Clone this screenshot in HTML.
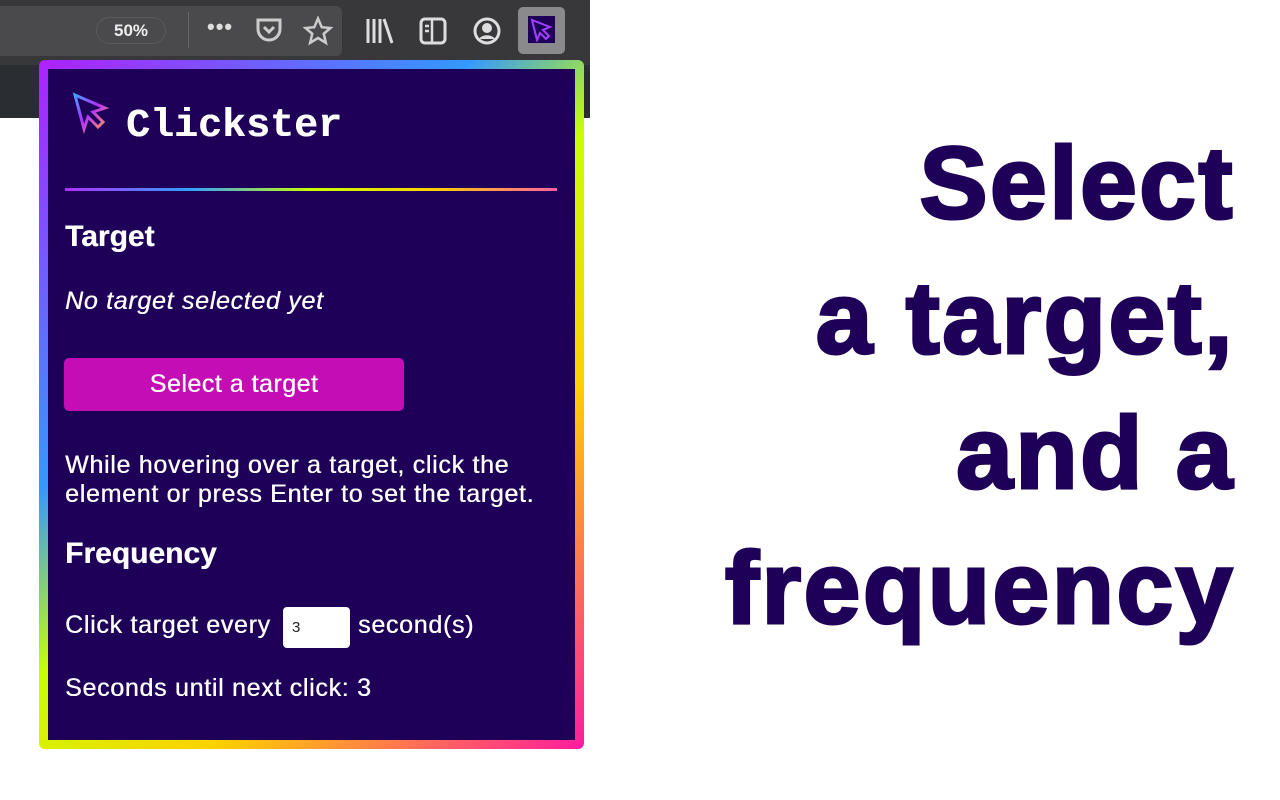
<!DOCTYPE html>
<html><head><style>
*{margin:0;padding:0;box-sizing:border-box}
body{width:1280px;height:800px;background:#fff;position:relative;overflow:hidden;font-family:"Liberation Sans",Arial,sans-serif}
.tb{position:absolute;left:0;top:0;width:590px;height:65px;background:#38383b}
.url{position:absolute;left:-10px;top:6px;width:352px;height:50px;background:#4a4a4d;border-radius:6px}
.strip{position:absolute;left:0;top:65px;width:590px;height:53px;background:#2a2e33}
.pill{position:absolute;left:96px;top:17px;width:70px;height:27px;border-radius:14px;border:1px solid #5a5a5d;color:#eee;font-size:17px;font-weight:bold;text-align:center;line-height:25px}
.ic{position:absolute;color:#ddd}
.panel{position:absolute;left:39px;top:60px;width:545px;height:689px;border-radius:6px;background:linear-gradient(135deg,#b020ff 0%,#3399ff 35%,#c8ff00 50%,#ffd000 70%,#ff1aa0 100%)}
.inner{position:absolute;left:9px;top:9px;right:9px;bottom:9px;background:#1e0058;color:#fff}
.t{position:absolute;left:17px;white-space:nowrap;text-shadow:0.4px 0 0 #fff}
.b{font-size:25px;letter-spacing:0.7px}
h2{font-size:30px;font-weight:bold}
.big{position:absolute;right:45px;top:116px;text-align:right;color:#1e0058;font-weight:bold;font-size:102px;line-height:135px;letter-spacing:2.5px;-webkit-text-stroke:3px #1e0058}
</style></head><body>
<div class="tb"><div class="url"></div>
<div class="pill">50%</div>
<div style="position:absolute;left:188px;top:12px;width:1px;height:36px;background:#666"></div>
<div class="ic" style="left:207px;top:14px;font-size:22px;font-weight:bold;letter-spacing:1px">•••</div>
<svg class="ic" style="left:255px;top:17px" width="28" height="26" viewBox="0 0 28 26"><path d="M3 3h22v9a11 11 0 0 1-22 0z" fill="none" stroke="#ccc" stroke-width="3"/><path d="M9 10l5 5 5-5" fill="none" stroke="#ccc" stroke-width="3"/></svg>
<svg style="position:absolute;left:303px;top:16px" width="30" height="30" viewBox="0 0 24 24"><path d="M12 2l3 7 7 .6-5.4 4.6 1.7 7.3L12 17.6 5.7 21.5l1.7-7.3L2 9.6 9 9z" fill="none" stroke="#ccc" stroke-width="2"/></svg>
<svg style="position:absolute;left:365px;top:17px" width="30" height="28" viewBox="0 0 30 28"><path d="M3 2v24M9 2v24M15 2v24M19 2l8 24" stroke="#ddd" stroke-width="3"/></svg>
<svg style="position:absolute;left:419px;top:17px" width="28" height="28" viewBox="0 0 28 28"><rect x="2" y="2" width="24" height="24" rx="4" fill="none" stroke="#ddd" stroke-width="3"/><path d="M13 2v24M6 9h4M6 14h4" stroke="#ddd" stroke-width="2.5"/></svg>
<svg style="position:absolute;left:473px;top:17px" width="28" height="28" viewBox="0 0 28 28"><circle cx="14" cy="14" r="12" fill="none" stroke="#ddd" stroke-width="3"/><circle cx="14" cy="11" r="5" fill="#ddd"/><path d="M6 22a9 7 0 0 1 16 0" fill="#ddd"/></svg>
<div style="position:absolute;left:518px;top:7px;width:47px;height:47px;background:#8a8a8c;border-radius:5px"></div>
<div style="position:absolute;left:528px;top:16px;width:27px;height:27px;background:#1e0058"></div>
<svg style="position:absolute;left:530px;top:18px" width="24" height="24" viewBox="0 0 24 24"><path d="M2 2l18 7-7 3 6 6-3 3-6-6-3 7z" fill="none" stroke="#a040ff" stroke-width="2"/></svg>
</div>
<div class="strip"></div>
<div class="panel"><div class="inner">
<svg style="position:absolute;left:24px;top:23px" width="38" height="42" viewBox="0 0 38 42"><defs><linearGradient id="g" x1="0" y1="0" x2="1" y2="1"><stop offset="0" stop-color="#40a0ff"/><stop offset=".5" stop-color="#b030ff"/><stop offset="1" stop-color="#ff9060"/></linearGradient></defs><path d="M3 3l30 13-12 4 10 10-5 5-10-10-4 12z" fill="none" stroke="url(#g)" stroke-width="3"/></svg>
<div class="t" style="left:78px;top:35px;font-family:'Liberation Mono',monospace;font-weight:bold;font-size:40px">Clickster</div>
<div style="position:absolute;left:17px;top:119px;width:492px;height:3px;background:linear-gradient(90deg,#b030ff,#30a0ff,#c8ff00,#ffd000,#ff60a0)"></div>
<h2 class="t" style="top:151px">Target</h2>
<div class="t b" style="top:218px;font-style:italic">No target selected yet</div>
<div style="position:absolute;left:16px;top:289px;width:340px;height:53px;background:#c40db5;border-radius:5px;text-align:center;line-height:53px;font-size:25px;letter-spacing:0.5px;text-shadow:0.4px 0 0 #fff">Select a target</div>
<div class="t b" style="top:382px;line-height:29px">While hovering over a target, click the<br>element or press Enter to set the target.</div>
<h2 class="t" style="top:468px">Frequency</h2>
<div class="t b" style="top:542px">Click target every</div>
<div style="position:absolute;left:235px;top:538px;width:67px;height:41px;background:#fff;border-radius:4px;color:#222;font-size:15px;padding:12px 0 0 9px">3</div>
<div class="t b" style="left:310px;top:542px">second(s)</div>
<div class="t b" style="top:605px">Seconds until next click: 3</div>
</div></div>
<div class="big">Select<br>a target,<br>and a<br>frequency</div>
</body></html>
